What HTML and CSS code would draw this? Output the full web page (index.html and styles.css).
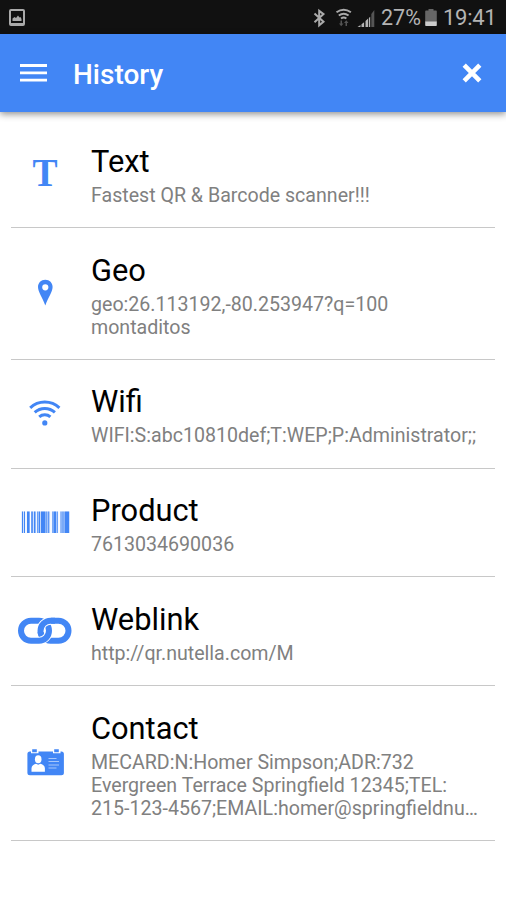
FILE: index.html
```html
<!DOCTYPE html>
<html lang="en">
<head>
<meta charset="utf-8">
<title>History</title>
<link rel="stylesheet" href="styles.css">
</head>
<body>
<div class="status">
  <svg class="shot" width="16" height="17" viewBox="0 0 16 17"><rect x="1" y="1" width="14" height="15" rx="1" fill="none" stroke="#aaa" stroke-width="2"/><path d="M1 14h14v2H1zM3.500 12V9.500L5.500 8l1.500 1 2-2.500 1.500 2 1-.5 1 2v2z" fill="#aaa"/></svg>
  <svg class="signals" width="64" height="20" viewBox="312 7 64 20">
    <path d="M314.500 12.500l9 8.200-4.300 3.600V9.700l4.300 3.400-9 8.200" fill="none" stroke="#aaa" stroke-width="2"/>
    <g fill="none" stroke="#aaa" stroke-width="2"><path d="M336.500 11.300q7.200-5 14.400 0"/><path d="M338.800 14.500q4.900-3.600 9.800 0"/><path d="M341 17.500q2.700-1.900 5.400 0"/></g>
    <path d="M340.500 19.500h1.500v3h1.500l-2.300 2.800-2.200-2.800h1.500zM345.500 25h1.500v-3h1.500l-2.200-2.700-2.300 2.700h1.500z" fill="#555"/>
    <path d="M357.500 26l3-2v2zM361.500 23.300l2.600-2V26h-2.600zM365.500 20l2.600-2.500V26h-2.600zM368.900 17l1.300-1.200V26h-1.300z" fill="#b5b5b5"/><path d="M371.300 13l3-4v17h-3z" fill="#555"/>
  </svg>
  <span class="percent">27%</span>
  <svg class="battery" width="12" height="18" viewBox="0 0 12 18"><path d="M3.500 0h5v1.500H11q.8 0 .8.800V13H.2V2.300q0-.8.8-.8h2.500z" fill="#666"/><path d="M.2 12.500h11.600v3.700q0 .8-.8.800H1q-.8 0-.8-.8z" fill="#ccc"/></svg>
  <span class="clock">19:41</span>
</div>
<header class="bar">
  <svg class="menu" width="27" height="18" viewBox="0 0 27 18"><path d="M0 1.500h27M0 8.800h27M0 16.200h27" stroke="#fff" stroke-width="2.800"/></svg>
  <h1>History</h1>
  <svg class="close" width="20" height="20" viewBox="0 0 20 20"><path d="M2.200 2.200l15.600 15.600M17.800 2.200L2.200 17.800" stroke="#fff" stroke-width="4.600"/></svg>
</header>
<main class="list">
  <article class="row">
    <div class="icon letter">T</div>
    <div class="body"><h2>Text</h2><p>Fastest QR &amp; Barcode scanner!!!</p></div>
  </article>
  <article class="row">
    <svg class="icon" viewBox="0 0 70 50"><path fill-rule="evenodd" d="M35.300 10.800c-4.300 0-7.300 3.200-7.300 7.200 0 4.500 4.300 10.500 7.300 18.500 3-8 7.300-14 7.300-18.500 0-4-3-7.200-7.300-7.200zm0 4.400a3.100 3.100 0 1 1 0 6.200 3.100 3.100 0 0 1 0-6.200z"/></svg>
    <div class="body"><h2>Geo</h2><p>geo:26.113192,-80.253947?q=100<br>montaditos</p></div>
  </article>
  <article class="row">
    <svg class="icon" viewBox="0 0 70 50"><g class="line"><path d="M20.200 18.800a21.300 21.300 0 0 1 29.200 0"/><path d="M24.700 23.400a15 15 0 0 1 20.200 0"/><path d="M29.200 27.900a8.500 8.500 0 0 1 11.200 0"/></g><circle cx="34.800" cy="33.900" r="2.600"/></svg>
    <div class="body"><h2>Wifi</h2><p>WIFI:S:abc10810def;T:WEP;P:Administrator;;</p></div>
  </article>
  <article class="row">
    <svg class="icon" viewBox="0 0 70 50"><path opacity=".25" d="M11.500 13.500h48.500V35H11.500z"/><path class="gaps" d="M15.300 13h1.400v23h-1.400zM19.800 13h1.200v23h-1.200zM25.600 13h1.100v23h-1.100zM40.200 13h1.600v23h-1.600zM48.200 13h1.700v23h-1.700z"/><path d="M12 13.500h1v21.500h-1zM14 13.500h1v21.500h-1zM17 13.500h2.600v21.500H17zM21.300 13.500h1.500v21.500h-1.500zM24 13.500h1.500v21.500H24zM27.300 13.500h.9v21.500h-.9zM28.800 13.500h1.300v21.500h-1.300zM31 13.500h4.500v21.500H31zM36.300 13.500h1v21.500h-1zM38.200 13.500h1v21.500h-1zM42.400 13.500h1.200v21.500h-1.200zM44 13.500h2v21.500h-2zM46.700 13.500h1v21.500h-1zM50.600 13.500h.9v21.500h-.9zM52.400 13.500h1.200v21.500h-1.200zM54.500 13.500H59v21.500h-4.500z"/></svg>
    <div class="body"><h2>Product</h2><p>7613034690036</p></div>
  </article>
  <article class="row">
    <svg class="icon" viewBox="0 0 70 50"><g class="chain"><rect x="30.500" y="14.700" width="28" height="20" rx="10"/><rect class="halo" x="11" y="14.700" width="28" height="20" rx="10"/><rect x="11" y="14.700" width="28" height="20" rx="10"/><path class="halo" d="M30.500 26v-1c0-5.600 4-10.300 10.500-10.300"/><path d="M31.300 29Q30.500 28 30.500 25C30.500 19 35 14.700 40.500 14.700H45"/></g></svg>
    <div class="body"><h2>Weblink</h2><p>http://qr.nutella.com/M</p></div>
  </article>
  <article class="row">
    <svg class="icon" viewBox="0 0 70 50"><rect x="17.400" y="13.500" width="36.500" height="23.700" rx="2.500"/><path class="cut" d="M21 11h7.500v4.300H21zM43 11h7.500v4.300H43z"/><path d="M22.200 11.300h4.600v3h-4.600zM44.200 11.300h4.600v3h-4.600z"/><g class="cut"><ellipse cx="28.200" cy="21.300" rx="3.300" ry="4"/><path d="M21.500 33.700v-3.500c0-2.500 2.500-4 4.500-4.500l2.200 1 2.200-1c2 .5 4.500 2 4.500 4.500v3.500z"/></g><path class="notes" d="M38.500 20.500h8M38.500 23.500h10.500M38.500 27h10.500M38.500 30h8"/></svg>
    <div class="body"><h2>Contact</h2><p>MECARD:N:Homer Simpson;ADR:732<br>Evergreen Terrace Springfield 12345;TEL:<br>215-123-4567;EMAIL:homer@springfieldnu…</p></div>
  </article>
</main>
</body>
</html>
```
FILE: styles.css
```css
* { box-sizing: border-box; }
body {
  margin: 0;
  height: 900px;
  overflow: hidden;
  background: #fff;
  font-family: Roboto, sans-serif;
}
h1, h2, p { margin: 0; font-weight: 400; white-space: nowrap; }
svg { display: block; flex: none; }
.status {
  display: flex;
  align-items: center;
  height: 34px;
  padding: 1px 10px 0 9px;
  background: #111;
  color: #b4b4b4;
  font-size: 22px;
  line-height: 34px;
}
.signals { margin-left: auto; }
.percent { width: 39px; margin-left: 5px; font-size: 21.500px; }
.battery { margin: 0 6px 0 5px; }
.clock { width: 53px; letter-spacing: -.3px; }
.bar {
  display: flex;
  align-items: center;
  height: 78px;
  padding: 0 24px 0 20px;
  background: #4286f5;
  color: #fff;
  box-shadow: 0 2px 7px rgba(0, 0, 0, .45);
}
.bar h1 { margin-left: 26px; padding-top: 3px; font-size: 28px; font-weight: 500; }
.close { margin-left: auto; }
.list { padding: 7.300px 11px 0; }
.row {
  display: flex;
  align-items: center;
  padding: 22.600px 0 20.050px;
  border-bottom: 1px solid #c8c8c8;
}
.icon {
  width: 70px;
  height: 50px;
  margin: -2px 11px 0 -1px;
  flex: none;
  fill: #4286f5;
}
.letter {
  color: #4286f5;
  font: bold 40px/50px "Liberation Serif", serif;
  text-align: center;
  transform: scaleX(.94);
}
.row h2 { margin-bottom: 2px; font-size: 30.800px; line-height: 40px; color: #000; }
.row p { font-size: 19.600px; line-height: 23.100px; color: #808080; }
.line { fill: none; stroke: #4286f5; stroke-width: 3; }
.gaps, .cut { fill: #fff; }
.chain { fill: none; stroke: #4286f5; stroke-width: 6; }
.chain .halo { stroke: #fff; stroke-width: 8; }
.notes { fill: none; stroke: #a8c7fa; stroke-width: 1; }
```
